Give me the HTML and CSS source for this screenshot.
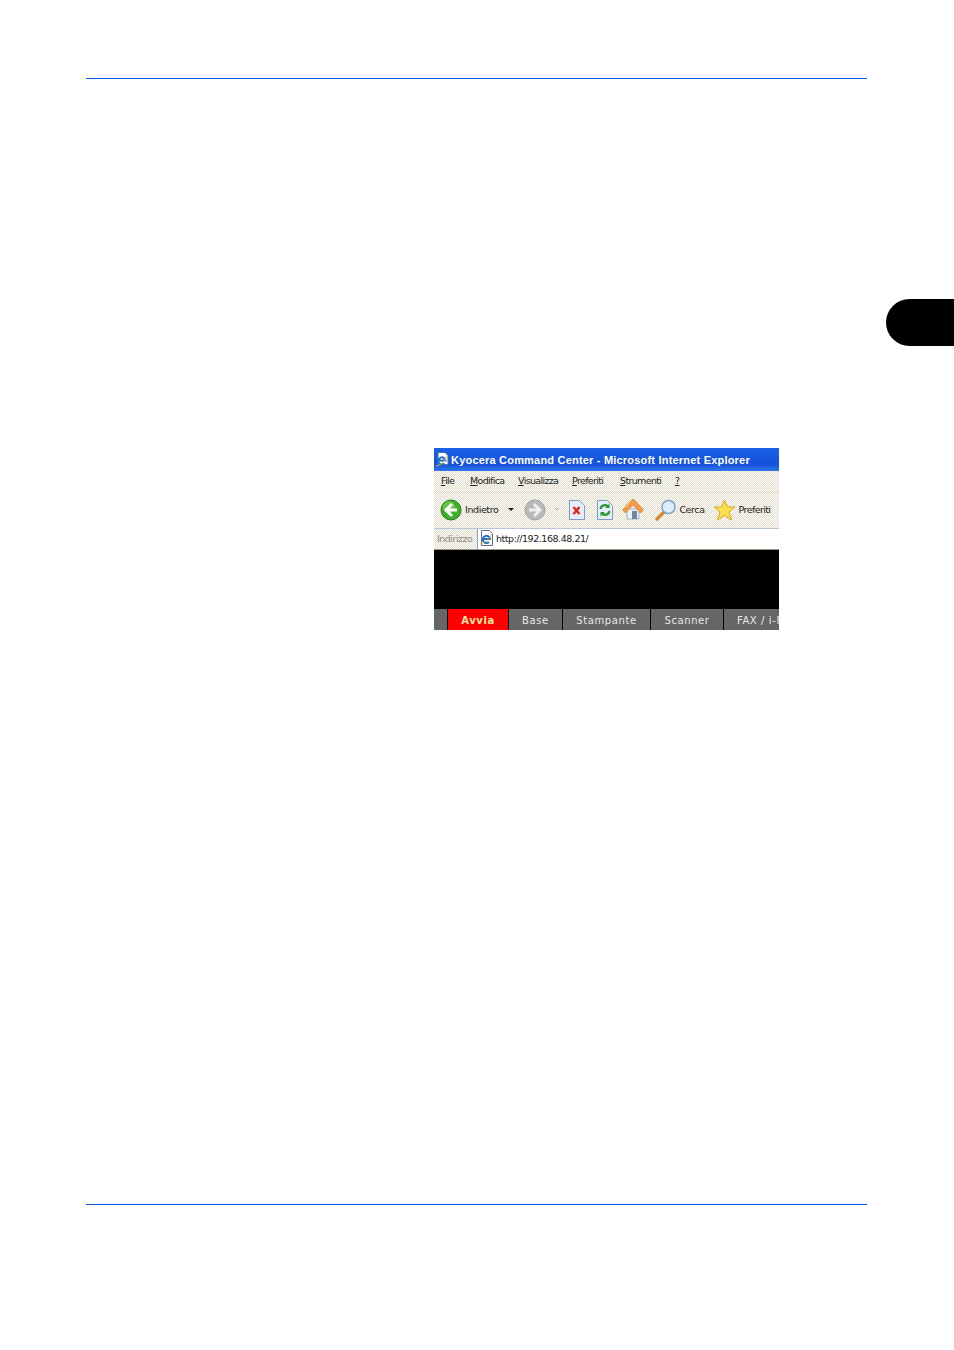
FILE: index.html
```html
<!DOCTYPE html>
<html lang="it">
<head>
    <meta charset="UTF-8">
    <title>Kyocera Command Center</title>
    <link rel="stylesheet" href="styles.css">
</head>
<body>
    <div class="page">
        <div class="rule"></div>
        <div class="figure">
            <div class="browser">
                <div class="titlebar">
                    <svg class="title-icon" width="15" height="16" viewBox="0 0 15 16">
                        <path d="M3 .5h7l3 3v9H3z" fill="#fff" stroke="#5a6d8c"/>
                        <path d="M3.500 8.500h7a3.600 3.600 0 1 0-1 3" fill="none" stroke="#1c6fd0" stroke-width="2"/>
                        <path d="M1 14c3 0 9-4 11-10" fill="none" stroke="#f0c030"/>
                    </svg>
                    <span>Kyocera Command Center - Microsoft Internet Explorer</span>
                </div>
                <div class="menubar">
                    <span class="menu-file"><u>F</u>ile</span>
                    <span class="menu-edit"><u>M</u>odifica</span>
                    <span class="menu-view"><u>V</u>isualizza</span>
                    <span class="menu-fav"><u>P</u>referiti</span>
                    <span class="menu-tools"><u>S</u>trumenti</span>
                    <span><u>?</u></span>
                </div>
                <div class="toolbar">
                    <svg class="tool-back" width="22" height="22" viewBox="0 0 22 22">
                        <circle cx="11" cy="11" r="10" fill="#3fae2a" stroke="#2b7d1e"/>
                        <circle cx="9" cy="8" r="6" fill="#7fd65a" opacity=".6"/>
                        <path d="M12 5l-6 6 6 6M6.500 11H17" fill="none" stroke="#fff" stroke-width="3"/>
                    </svg>
                    <span class="tool-label">Indietro</span>
                    <span class="caret"></span>
                    <svg class="tool-forward" width="22" height="22" viewBox="0 0 22 22">
                        <circle cx="11" cy="11" r="10" fill="#b9b9b9" stroke="#a2a2a2"/>
                        <path d="M10 5l6 6-6 6M15.500 11H5" fill="none" stroke="#eee" stroke-width="3"/>
                    </svg>
                    <span class="caret caret-faint"></span>
                    <svg class="tool-stop" width="18" height="22" viewBox="0 0 18 22">
                        <path d="M1.500 1.500h10l5 5v14h-15z" fill="#e6eefb" stroke="#7f9ac4"/>
                        <path d="M5.500 8l6 7M11.500 8l-6 7" stroke="#e0281c" stroke-width="2.400"/>
                    </svg>
                    <svg class="tool-refresh" width="18" height="22" viewBox="0 0 18 22">
                        <path d="M1.500 1.500h10l5 5v14h-15z" fill="#e6eefb" stroke="#7f9ac4"/>
                        <path d="M4.500 10a4.500 4.500 0 0 1 8-2M13.500 12a4.500 4.500 0 0 1-8 2" fill="none" stroke="#2a9a2e" stroke-width="2.200"/>
                        <path d="M13.500 4.500v4.500h-4.500zM4.500 17.500v-4.500h4.500z" fill="#2a9a2e"/>
                    </svg>
                    <svg class="tool-home" width="22" height="22" viewBox="0 0 22 22">
                        <path d="M5 10v10h12v-10z" fill="#eef0f4" stroke="#a9b2c2"/>
                        <path d="M.5 11L10 .5h2L21.500 11l-3 3L11 6l-7.500 8z" fill="#f09a4a" stroke="#d5782c" stroke-width=".6"/>
                        <path d="M3 6L9 2 4 9z" fill="#f7b878"/>
                        <rect x="10" y="12" width="5" height="8" fill="#6d87ad"/>
                    </svg>
                    <svg class="tool-search" width="22" height="22" viewBox="0 0 22 22">
                        <path d="M2 20l7-7" stroke="#d8892c" stroke-width="3.400" stroke-linecap="round"/>
                        <circle cx="13.500" cy="8" r="6.500" fill="#dcedfb" stroke="#7fa3c8" stroke-width="1.500"/>
                    </svg>
                    <span class="tool-label label-search">Cerca</span>
                    <svg class="tool-star" width="23" height="22" viewBox="0 0 23 22">
                        <path d="M11.500 1l3 7h7.500l-6 5 2.500 8-7-4.500-7 4.500 2.500-8-6-5h7.500z" fill="#fbe04a" stroke="#d6a92a"/>
                    </svg>
                    <span class="tool-label label-fav">Preferiti</span>
                </div>
                <div class="addressbar">
                    <span class="address-label">Indirizzo</span>
                    <div class="address-field">
                        <svg width="16" height="16" viewBox="0 0 16 16">
                            <path d="M2.500 .5h8l3 3v12h-11z" fill="#fff" stroke="#5a6d8c"/>
                            <path d="M4 9h7a3.600 3.600 0 1 0-1 3" fill="none" stroke="#1c6fd0" stroke-width="2"/>
                            <path d="M1 14c3 0 9-4 12-10" fill="none" stroke="#f0c030"/>
                        </svg>
                        <span>http://192.168.48.21/</span>
                    </div>
                </div>
                <div class="banner"></div>
                <div class="tabs">
                    <div class="tab"></div>
                    <div class="tab tab-active">Avvia</div>
                    <div class="tab">Base</div>
                    <div class="tab">Stampante</div>
                    <div class="tab">Scanner</div>
                    <div class="tab">FAX / i-FAX</div>
                </div>
            </div>
        </div>
        <div class="rule rule-bottom"></div>
    </div>
    <div class="chapter-tab"></div>
</body>
</html>
```

FILE: styles.css
```css
html, body {
    margin: 0;
    padding: 0;
    background: #fff;
}
.page {
    padding: 78px 87px 0 86px;
    height: 1272px;
}
.rule {
    height: 1px;
    background: #0b5fe0;
}
.rule-bottom {
    margin-top: 574px;
}
.figure {
    margin: 369px 0 0 348px;
}
.browser {
    width: 345px;
    height: 182px;
    overflow: hidden;
    font-family: "DejaVu Sans", sans-serif;
    font-size: 9.500px;
    color: #222;
    background-color: #fbfaf5;
    background-image: conic-gradient(#e2dfd0 25%, transparent 0 50%, #e2dfd0 0 75%, transparent 0);
    background-size: 2px 2px;
}
.titlebar {
    height: 23px;
    display: flex;
    align-items: center;
    gap: 1px;
    padding-left: 1px;
    background: linear-gradient(#1a62e6, #1650d8 70%, #2f78ee);
    color: #fff;
    font-family: "Liberation Sans", sans-serif;
    font-size: 11px;
    font-weight: bold;
    letter-spacing: .2px;
    white-space: nowrap;
}
.title-icon {
    flex-shrink: 0;
}
.menubar {
    height: 21px;
    display: flex;
    align-items: center;
    padding: 0 0 2px 7px;
    box-sizing: border-box;
    white-space: nowrap;
    letter-spacing: -.65px;
}
.menu-file { width: 29px; }
.menu-edit { width: 48px; }
.menu-view { width: 54px; }
.menu-fav { width: 48px; }
.menu-tools { width: 55px; }
.toolbar {
    height: 37px;
    display: flex;
    align-items: center;
    padding: 0 0 2px 6px;
    box-sizing: border-box;
    border-top: 1px solid #e4e1d2;
    border-bottom: 1px solid #b9c6d8;
    white-space: nowrap;
}
.tool-label {
    margin-left: 3px;
    letter-spacing: -.4px;
}
.caret {
    width: 0;
    height: 0;
    margin: 0 0 0 10px;
    border-left: 3px solid transparent;
    border-right: 3px solid transparent;
    border-top: 3px solid #222;
}
.caret-faint {
    margin-left: 8px;
    border-top-color: #ccc;
}
.tool-forward { margin-left: 10px; }
.tool-stop { margin-left: 8px; }
.tool-refresh { margin-left: 10px; }
.tool-home { margin-left: 8px; }
.tool-search { margin-left: 11px; }
.label-search { margin-left: 2px; margin-right: 8px; }
.label-fav { letter-spacing: -.6px; margin-left: 3px; }
.addressbar {
    height: 21px;
    display: flex;
    align-items: center;
    box-sizing: border-box;
    border-bottom: 1px solid #9a9a82;
}
.address-label {
    width: 43px;
    padding: 0 0 2px 3px;
    box-sizing: border-box;
    color: #8c8c80;
    letter-spacing: -.5px;
}
.address-field {
    flex: 1;
    height: 20px;
    display: flex;
    align-items: center;
    gap: 1px;
    padding: 0 0 2px 1px;
    box-sizing: border-box;
    background: #fff;
    border-left: 1px solid #8aa0b8;
    letter-spacing: -.45px;
}
.banner {
    height: 59px;
    background: #000;
}
.tabs {
    height: 21px;
    display: grid;
    grid-template-columns: 14px 61px 54px 88px 73px 55px;
}
.tab {
    display: flex;
    align-items: center;
    justify-content: center;
    padding-top: 2px;
    background: #666;
    color: #e8e8e8;
    font-family: "DejaVu Sans", sans-serif;
    font-size: 10px;
    letter-spacing: .6px;
    white-space: nowrap;
    overflow: hidden;
    box-sizing: border-box;
    border-right: 1px solid #000;
}
.tab:last-child {
    justify-content: flex-start;
    padding-left: 13px;
    border-right: 0;
}
.tab-active {
    background: #f00;
    color: #ffe9a0;
    font-weight: bold;
}
.chapter-tab {
    position: absolute;
    top: 299px;
    left: 886px;
    width: 68px;
    height: 47px;
    background: #000;
    border-radius: 24px 0 0 24px;
}
```
